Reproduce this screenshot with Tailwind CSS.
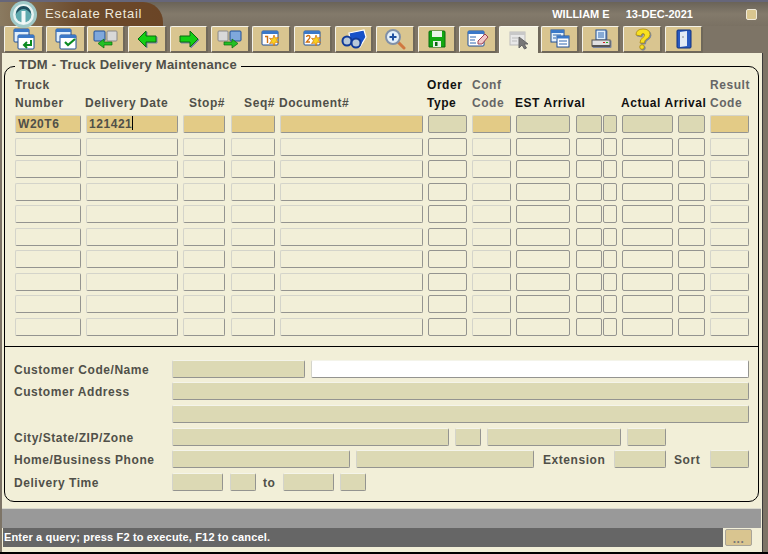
<!DOCTYPE html>
<html><head><meta charset="utf-8"><script src="https://cdn.jsdelivr.net/npm/@tailwindcss/browser@4"></script></head>
<body class="m-0 overflow-hidden bg-[#7d7466]">
<div class="w-[768px] h-[554px] overflow-hidden bg-[#7d7466] font-['Liberation_Sans',sans-serif] font-bold text-[12px] tracking-[0.55px] text-[#505049]">
<!-- title bar -->
<div class="relative h-[26px] border-t-[2px] border-[#66667a] bg-gradient-to-b from-[#6a6358] via-[#837a6b] to-[#7a7163] flex items-center">
  <div class="absolute left-0 top-0 w-[163px] h-[24px] rounded-tr-[20px] bg-gradient-to-r from-[#8a7a60] via-[#6b4a2c] to-[#6b4526]"></div>
  <svg class="absolute left-[9px] top-[-1px]" width="29" height="27" viewBox="0 0 29 27"><circle cx="14.500" cy="13.500" r="13.500" fill="#9fc9c8"/><circle cx="14.500" cy="13.500" r="10.500" fill="#e8f3f2"/><circle cx="14.500" cy="13.500" r="8" fill="#5fa9ae"/><path d="M7 13Q8 5 14.500 5T22 13Q18 8 14.500 8T7 13" fill="#1f4f60"/><path d="M12.500 10h4v13h-4z" fill="#f2f8f8"/></svg>
  <span class="relative ml-[45px] text-[13px] font-normal text-[#efe9dc] tracking-[0.7px]">Escalate Retail</span>
  <span class="relative ml-[410px] text-white tracking-[0px] text-[11px]">WILLIAM E</span>
  <span class="relative ml-[16px] text-white tracking-[0px] text-[11px]">13-DEC-2021</span>
  <div class="ml-[53px] w-[11px] h-[11px] bg-[#d9c68f] rounded-[2px] border border-[#efe9d8] relative"></div>
</div>
<!-- toolbar -->
<div class="flex h-[27px] pl-[4px] [&>div]:h-[27px] [&>div]:flex [&>div]:items-center [&>div]:justify-center [&>div]:rounded-[2px] [&>div]:border-t [&>div]:border-l [&>div]:border-r-2 [&>div]:border-b-2 [&>div]:border-t-[#f4f2e8] [&>div]:border-l-[#f4f2e8] [&>div]:border-r-[#6f685a] [&>div]:border-b-[#6f685a] [&>div]:bg-[#d9c590]">
  <div class="w-[40px]"><svg width="24" height="22" viewBox="0 0 24 22"><rect x="2" y="1" width="15" height="13" rx="1" fill="#dfeefb" stroke="#1f4f96"/><rect x="2" y="1" width="15" height="3" fill="#3a78c8"/><rect x="6" y="7" width="16" height="14" rx="1" fill="#fff" stroke="#1f4f96"/><rect x="6" y="7" width="16" height="3" fill="#3a78c8"/><path d="M19 12v5h-7m3-3l-3 3 3 3" fill="none" stroke="#0a8a20" stroke-width="2"/></svg></div>
  <div class="ml-[2px] w-[40px]"><svg width="24" height="22" viewBox="0 0 24 22"><rect x="2" y="1" width="15" height="13" rx="1" fill="#dfeefb" stroke="#1f4f96"/><rect x="2" y="1" width="15" height="3" fill="#3a78c8"/><rect x="6" y="7" width="16" height="14" rx="1" fill="#fff" stroke="#1f4f96"/><rect x="6" y="7" width="16" height="3" fill="#3a78c8"/><path d="M11 14l3 3 7-6" fill="none" stroke="#0a8a20" stroke-width="2.200"/></svg></div>
  <div class="ml-[1px] w-[38px]"><svg width="26" height="20" viewBox="0 0 26 20"><rect x="1" y="2" width="11" height="10" rx="1" fill="#7fa8dc" stroke="#1f4f96"/><rect x="14" y="2" width="10" height="10" rx="1" fill="#d8d8d8" stroke="#888"/><path d="M19 13h-8v-3l-6 4.500 6 4.500v-3h8z" fill="#24c024" stroke="#0a6a10" stroke-width=".7"/></svg></div>
  <div class="ml-[3px] w-[39px]"><svg width="20" height="18" viewBox="0 0 20 18" class="drop-shadow-[1px_1px_0_#7a86a0]"><path d="M9 1 1 9l8 8v-5h10V6H9z" fill="#14d014" stroke="#0a6a10" stroke-linejoin="round"/></svg></div>
  <div class="ml-[3px] w-[38px]"><svg width="20" height="18" viewBox="0 0 20 18" class="drop-shadow-[1px_1px_0_#7a86a0]"><path d="M11 1l8 8-8 8v-5H1V6h10z" fill="#14d014" stroke="#0a6a10" stroke-linejoin="round"/></svg></div>
  <div class="ml-[3px] w-[39px]"><svg width="26" height="20" viewBox="0 0 26 20"><rect x="1" y="2" width="10" height="10" rx="1" fill="#d8d8d8" stroke="#888"/><rect x="13" y="2" width="11" height="10" rx="1" fill="#7fa8dc" stroke="#1f4f96"/><path d="M7 13h8v-3l6 4.500-6 4.500v-3H7z" fill="#24c024" stroke="#0a6a10" stroke-width=".7"/></svg></div>
  <div class="ml-[2px] w-[39px]"><svg width="20" height="20" viewBox="0 0 20 20"><rect x="1" y="2" width="16" height="14" rx="1" fill="#fff" stroke="#1f4f96"/><rect x="1" y="2" width="16" height="3" fill="#3a78c8"/><path d="M4 7.500h2.500V14" fill="none" stroke="#d07010" stroke-width="1.400"/><path d="M13 6l1.300 3 3.200-.6-2 2.600 2 2.600-3.200-.4L13 17l-1.300-3-3.200.6 2-2.800-2-2.600 3.200.6z" fill="#f8d020" stroke="#d07010" stroke-width=".7"/></svg></div>
  <div class="ml-[3px] w-[38px]"><svg width="20" height="20" viewBox="0 0 20 20"><rect x="1" y="2" width="16" height="14" rx="1" fill="#fff" stroke="#1f4f96"/><rect x="1" y="2" width="16" height="3" fill="#3a78c8"/><path d="M3.500 8q0-1.500 1.700-1.500T7 8q0 1-3.500 5H7" fill="none" stroke="#d07010" stroke-width="1.300"/><path d="M13 6l1.300 3 3.200-.6-2 2.600 2 2.600-3.200-.4L13 17l-1.300-3-3.200.6 2-2.800-2-2.600 3.200.6z" fill="#f8d020" stroke="#d07010" stroke-width=".7"/></svg></div>
  <div class="ml-[3px] w-[38px]"><svg width="26" height="20" viewBox="0 0 26 20"><path d="M8 4l15-3 2 7-6 10-7-2-3-6z" fill="#1650c8" stroke="#fff" stroke-width="1.200"/><circle cx="6" cy="12" r="4.500" fill="#b8c8d8" stroke="#103a98" stroke-width="2"/><circle cx="15" cy="14" r="4.500" fill="#b8c8d8" stroke="#103a98" stroke-width="2"/></svg></div>
  <div class="ml-[3px] w-[39px]"><svg width="22" height="22" viewBox="0 0 22 22"><path d="M13 13l7 7" stroke="#d07840" stroke-width="3" stroke-linecap="round"/><circle cx="9" cy="9" r="7" fill="#e4f0fa" stroke="#8090a8" stroke-width="2"/><path d="M9 5.500v7M5.500 9h7" stroke="#2050a0" stroke-width="2"/></svg></div>
  <div class="ml-[3px] w-[38px]"><svg width="18" height="18" viewBox="0 0 18 18"><path d="M1 2q0-1 1-1h14q1 0 1 1v15H1z" fill="#12a812" stroke="#0a6a10"/><rect x="4" y="1" width="10" height="6" fill="#e8f4e8"/><rect x="5" y="11" width="8" height="6" fill="#e8f0e8"/><rect x="7" y="12" width="2.500" height="4" fill="#0a6a10"/></svg></div>
  <div class="ml-[3px] w-[38px]"><svg width="22" height="18" viewBox="0 0 22 18"><rect x="1" y="1" width="16" height="15" rx="1" fill="#fff" stroke="#1f4f96"/><rect x="1" y="1" width="16" height="3" fill="#3a78c8"/><path d="M3 7h6M3 10h5M3 13h6" stroke="#2f67b0"/><path d="M11 11l7-7 3 3-6 7h-4z" fill="#f0c8c8" stroke="#a04050"/></svg></div>
  <div class="ml-[2px] w-[41px] bg-[#f2efd8]! border-b-0! border-t-[#fbfaf0]! border-l-[#fbfaf0]! rounded-b-none!"><svg width="20" height="20" viewBox="0 0 20 20"><rect x="1" y="2" width="15" height="13" fill="#e8e8e8" stroke="#bbb"/><rect x="1" y="2" width="15" height="3" fill="#c8c8c8"/><path d="M3 8h6M3 11h5" stroke="#bbb"/><path d="M10 7v11l3-3 2.500 4 2-1-2.500-4h4z" fill="#777" stroke="#666"/></svg></div>
  <div class="ml-[1px] w-[38px]"><svg width="20" height="20" viewBox="0 0 20 20"><rect x="1" y="1" width="13" height="12" fill="#e4f0fa" stroke="#1f4f96"/><rect x="1" y="1" width="13" height="3" fill="#3a78c8"/><rect x="7" y="7" width="12" height="11" fill="#fff" stroke="#1f4f96"/><rect x="7" y="7" width="12" height="2.500" fill="#3a78c8"/><path d="M3 6h8M3 9h3M9 12h8M9 15h8" stroke="#2f67b0"/></svg></div>
  <div class="ml-[3px] w-[38px]"><svg width="20" height="20" viewBox="0 0 20 20" class="drop-shadow-[1px_1px_0_#7a86a0]"><rect x="5" y="1" width="10" height="10" fill="#dfeefb" stroke="#1f4f96"/><path d="M7 4h6M7 6h6M7 8h6" stroke="#2f67b0"/><rect x="1" y="11" width="18" height="6" fill="#e0e0e0" stroke="#555"/><rect x="12" y="13" width="2" height="1" fill="#d02020"/><rect x="15" y="13" width="2" height="1" fill="#20b020"/><rect x="1" y="16" width="18" height="2" fill="#555"/></svg></div>
  <div class="ml-[3px] w-[39px]"><svg width="20" height="22" viewBox="0 0 20 22" class="drop-shadow-[1px_1px_0_#7a86a0]"><path d="M4 7q0-6 7-6t7 5.500q0 3-4 5Q12.500 12.500 12.500 15H8q0-4 3-5.500 1.500-.7 1.500-2.500 0-1.500-1.500-1.500-1.700 0-2 2.500z" fill="#f8e020" stroke="#a88810" stroke-width=".8"/><circle cx="10" cy="19" r="2.300" fill="#f8e020" stroke="#a88810" stroke-width=".8"/></svg></div>
  <div class="ml-[3px] w-[38px]"><svg width="16" height="20" viewBox="0 0 16 20"><rect x="1" y="1" width="14" height="18" rx="1" fill="#2a5ac0" stroke="#10307c"/><path d="M4 3l7-1v15l-7 1z" fill="#e4eaf4"/><path d="M6 8h2" stroke="#888"/></svg></div>
</div>
<!-- main cream panel -->
<div class="ml-[2px] w-[761px] h-[499px] bg-[#f2efd8] border-r border-[#3a3a3a] pt-[13px]">
  <div class="relative ml-[2px] w-[755px] h-[436px] border border-black rounded-[10px] pt-[9px]">
    <div class="absolute left-[10px] top-[-10px] px-[4px] bg-[#f2efd8] whitespace-nowrap text-[13px] leading-[15px] tracking-[0.22px]">TDM - Truck Delivery Maintenance</div>
    <!-- headers -->
    <div class="flex items-end h-[36px] ml-[10px] leading-[18px] whitespace-nowrap">
      <div class="w-[70px]">Truck<br>Number</div>
      <div class="w-[98px]">Delivery Date</div>
      <div class="w-[42px] text-right">Stop#</div>
      <div class="w-[50px] text-right">Seq#</div>
      <div class="ml-[4px] w-[148px]">Document#</div>
      <div class="w-[45px] text-[#111]">Order<br>Type</div>
      <div class="w-[43px] text-[#666]">Conf<br>Code</div>
      <div class="w-[106px] text-[#111]">EST Arrival</div>
      <div class="w-[89px] text-[#111]">Actual Arrival</div>
      <div class="text-[#666]">Result<br>Code</div>
    </div>
    <!-- grid rows -->
    <div class="mt-[3px] ml-[10px] flex flex-col gap-[4.5px] [&>div]:flex [&>div]:h-[18px] [&>div>div]:rounded-[2px] [&>div>div]:border [&>div>div]:border-t-[#d4d4ca] [&>div>div]:border-l-[#d4d4ca] [&>div>div]:border-r-[#949490] [&>div>div]:border-b-[#949490]">
      <div class="[&>div]:bg-[#e3cb86] leading-[16px]">
        <div class="w-[66px] pl-[2px]">W20T6</div><div class="ml-[5px] w-[92px] pl-[2px]">121421<span class="inline-block w-[1px] h-[14px] bg-black align-[-2px]"></span></div><div class="ml-[5px] w-[42px]"></div><div class="ml-[6px] w-[44px]"></div><div class="ml-[5px] w-[143px]"></div><div class="ml-[5px] w-[39px] bg-[#dcd9b4]! border-[#949490]!"></div><div class="ml-[5px] w-[39px]"></div><div class="ml-[5px] w-[54px] bg-[#dcd9b4]! border-[#949490]!"></div><div class="ml-[6px] w-[26px] bg-[#dcd9b4]! border-[#949490]!"></div><div class="ml-[1px] w-[14px] bg-[#dcd9b4]! border-[#949490]!"></div><div class="ml-[5px] w-[51px] bg-[#dcd9b4]! border-[#949490]!"></div><div class="ml-[5px] w-[27px] bg-[#dcd9b4]! border-[#949490]!"></div><div class="ml-[5px] w-[39px]"></div>
      </div>
      <div><div class="w-[66px]"></div><div class="ml-[5px] w-[92px]"></div><div class="ml-[5px] w-[42px]"></div><div class="ml-[6px] w-[44px]"></div><div class="ml-[5px] w-[143px]"></div><div class="ml-[5px] w-[39px] border-[#949490]!"></div><div class="ml-[5px] w-[39px]"></div><div class="ml-[5px] w-[54px] border-[#949490]!"></div><div class="ml-[6px] w-[26px] border-[#949490]!"></div><div class="ml-[1px] w-[14px] border-[#949490]!"></div><div class="ml-[5px] w-[51px] border-[#949490]!"></div><div class="ml-[5px] w-[27px] border-[#949490]!"></div><div class="ml-[5px] w-[39px]"></div></div>
      <div><div class="w-[66px]"></div><div class="ml-[5px] w-[92px]"></div><div class="ml-[5px] w-[42px]"></div><div class="ml-[6px] w-[44px]"></div><div class="ml-[5px] w-[143px]"></div><div class="ml-[5px] w-[39px] border-[#949490]!"></div><div class="ml-[5px] w-[39px]"></div><div class="ml-[5px] w-[54px] border-[#949490]!"></div><div class="ml-[6px] w-[26px] border-[#949490]!"></div><div class="ml-[1px] w-[14px] border-[#949490]!"></div><div class="ml-[5px] w-[51px] border-[#949490]!"></div><div class="ml-[5px] w-[27px] border-[#949490]!"></div><div class="ml-[5px] w-[39px]"></div></div>
      <div><div class="w-[66px]"></div><div class="ml-[5px] w-[92px]"></div><div class="ml-[5px] w-[42px]"></div><div class="ml-[6px] w-[44px]"></div><div class="ml-[5px] w-[143px]"></div><div class="ml-[5px] w-[39px] border-[#949490]!"></div><div class="ml-[5px] w-[39px]"></div><div class="ml-[5px] w-[54px] border-[#949490]!"></div><div class="ml-[6px] w-[26px] border-[#949490]!"></div><div class="ml-[1px] w-[14px] border-[#949490]!"></div><div class="ml-[5px] w-[51px] border-[#949490]!"></div><div class="ml-[5px] w-[27px] border-[#949490]!"></div><div class="ml-[5px] w-[39px]"></div></div>
      <div><div class="w-[66px]"></div><div class="ml-[5px] w-[92px]"></div><div class="ml-[5px] w-[42px]"></div><div class="ml-[6px] w-[44px]"></div><div class="ml-[5px] w-[143px]"></div><div class="ml-[5px] w-[39px] border-[#949490]!"></div><div class="ml-[5px] w-[39px]"></div><div class="ml-[5px] w-[54px] border-[#949490]!"></div><div class="ml-[6px] w-[26px] border-[#949490]!"></div><div class="ml-[1px] w-[14px] border-[#949490]!"></div><div class="ml-[5px] w-[51px] border-[#949490]!"></div><div class="ml-[5px] w-[27px] border-[#949490]!"></div><div class="ml-[5px] w-[39px]"></div></div>
      <div><div class="w-[66px]"></div><div class="ml-[5px] w-[92px]"></div><div class="ml-[5px] w-[42px]"></div><div class="ml-[6px] w-[44px]"></div><div class="ml-[5px] w-[143px]"></div><div class="ml-[5px] w-[39px] border-[#949490]!"></div><div class="ml-[5px] w-[39px]"></div><div class="ml-[5px] w-[54px] border-[#949490]!"></div><div class="ml-[6px] w-[26px] border-[#949490]!"></div><div class="ml-[1px] w-[14px] border-[#949490]!"></div><div class="ml-[5px] w-[51px] border-[#949490]!"></div><div class="ml-[5px] w-[27px] border-[#949490]!"></div><div class="ml-[5px] w-[39px]"></div></div>
      <div><div class="w-[66px]"></div><div class="ml-[5px] w-[92px]"></div><div class="ml-[5px] w-[42px]"></div><div class="ml-[6px] w-[44px]"></div><div class="ml-[5px] w-[143px]"></div><div class="ml-[5px] w-[39px] border-[#949490]!"></div><div class="ml-[5px] w-[39px]"></div><div class="ml-[5px] w-[54px] border-[#949490]!"></div><div class="ml-[6px] w-[26px] border-[#949490]!"></div><div class="ml-[1px] w-[14px] border-[#949490]!"></div><div class="ml-[5px] w-[51px] border-[#949490]!"></div><div class="ml-[5px] w-[27px] border-[#949490]!"></div><div class="ml-[5px] w-[39px]"></div></div>
      <div><div class="w-[66px]"></div><div class="ml-[5px] w-[92px]"></div><div class="ml-[5px] w-[42px]"></div><div class="ml-[6px] w-[44px]"></div><div class="ml-[5px] w-[143px]"></div><div class="ml-[5px] w-[39px] border-[#949490]!"></div><div class="ml-[5px] w-[39px]"></div><div class="ml-[5px] w-[54px] border-[#949490]!"></div><div class="ml-[6px] w-[26px] border-[#949490]!"></div><div class="ml-[1px] w-[14px] border-[#949490]!"></div><div class="ml-[5px] w-[51px] border-[#949490]!"></div><div class="ml-[5px] w-[27px] border-[#949490]!"></div><div class="ml-[5px] w-[39px]"></div></div>
      <div><div class="w-[66px]"></div><div class="ml-[5px] w-[92px]"></div><div class="ml-[5px] w-[42px]"></div><div class="ml-[6px] w-[44px]"></div><div class="ml-[5px] w-[143px]"></div><div class="ml-[5px] w-[39px] border-[#949490]!"></div><div class="ml-[5px] w-[39px]"></div><div class="ml-[5px] w-[54px] border-[#949490]!"></div><div class="ml-[6px] w-[26px] border-[#949490]!"></div><div class="ml-[1px] w-[14px] border-[#949490]!"></div><div class="ml-[5px] w-[51px] border-[#949490]!"></div><div class="ml-[5px] w-[27px] border-[#949490]!"></div><div class="ml-[5px] w-[39px]"></div></div>
      <div><div class="w-[66px]"></div><div class="ml-[5px] w-[92px]"></div><div class="ml-[5px] w-[42px]"></div><div class="ml-[6px] w-[44px]"></div><div class="ml-[5px] w-[143px]"></div><div class="ml-[5px] w-[39px] border-[#949490]!"></div><div class="ml-[5px] w-[39px]"></div><div class="ml-[5px] w-[54px] border-[#949490]!"></div><div class="ml-[6px] w-[26px] border-[#949490]!"></div><div class="ml-[1px] w-[14px] border-[#949490]!"></div><div class="ml-[5px] w-[51px] border-[#949490]!"></div><div class="ml-[5px] w-[27px] border-[#949490]!"></div><div class="ml-[5px] w-[39px]"></div></div>
    </div>
    <div class="mt-[10px] border-t border-black"></div>
    <!-- details -->
    <div class="mt-[13px] ml-[9px] flex flex-col gap-[4.7px] leading-[20px] [&>div]:flex [&>div]:h-[18px] [&_i]:block [&_i]:rounded-[2px] [&_i]:bg-[#dcd9b4] [&_i]:border [&_i]:border-t-[#f4f4ea] [&_i]:border-l-[#d4d4ca] [&_i]:border-r-[#949490] [&_i]:border-b-[#949490]">
      <div><span class="w-[158px]">Customer Code/Name</span><i class="w-[133px]"></i><i class="ml-[6px] w-[438px] bg-white!"></i></div>
      <div><span class="w-[158px]">Customer Address</span><i class="w-[577px]"></i></div>
      <div><span class="w-[158px]"></span><i class="w-[577px]"></i></div>
      <div><span class="w-[158px]">City/State/ZIP/Zone</span><i class="w-[277px]"></i><i class="ml-[6px] w-[26px]"></i><i class="ml-[6px] w-[134px]"></i><i class="ml-[6px] w-[39px]"></i></div>
      <div><span class="w-[158px]">Home/Business Phone</span><i class="w-[178px]"></i><i class="ml-[6px] w-[178px]"></i><span class="ml-[9px] w-[71px]">Extension</span><i class="w-[52px]"></i><span class="ml-[8px] w-[36px]">Sort</span><i class="w-[39px]"></i></div>
      <div><span class="w-[158px]">Delivery Time</span><i class="w-[51px]"></i><i class="ml-[7px] w-[26px]"></i><span class="ml-[7px] w-[20px]">to</span><i class="w-[51px]"></i><i class="ml-[6px] w-[26px]"></i></div>
    </div>
  </div>
  <!-- status -->
  <div class="mt-[6px] w-[759px] h-[20px] bg-[#999999] border-t border-[#d8d8cc]"></div>
  <div class="flex h-[19px]">
    <div class="ml-[1px] w-[720px] bg-[#666666] text-white text-[11px] leading-[19px] pl-[1px] tracking-[0.15px] whitespace-nowrap">Enter a query; press F2 to execute, F12 to cancel.</div>
    <div class="ml-[2px] mt-[1px] w-[27px] h-[17px] bg-[#d9c590] border border-[#a8a498] rounded-[2px] text-center leading-[18px] text-[#777]">...</div>
  </div>
</div>
<div class="h-[2px] bg-black"></div>
</div>
</body></html>
